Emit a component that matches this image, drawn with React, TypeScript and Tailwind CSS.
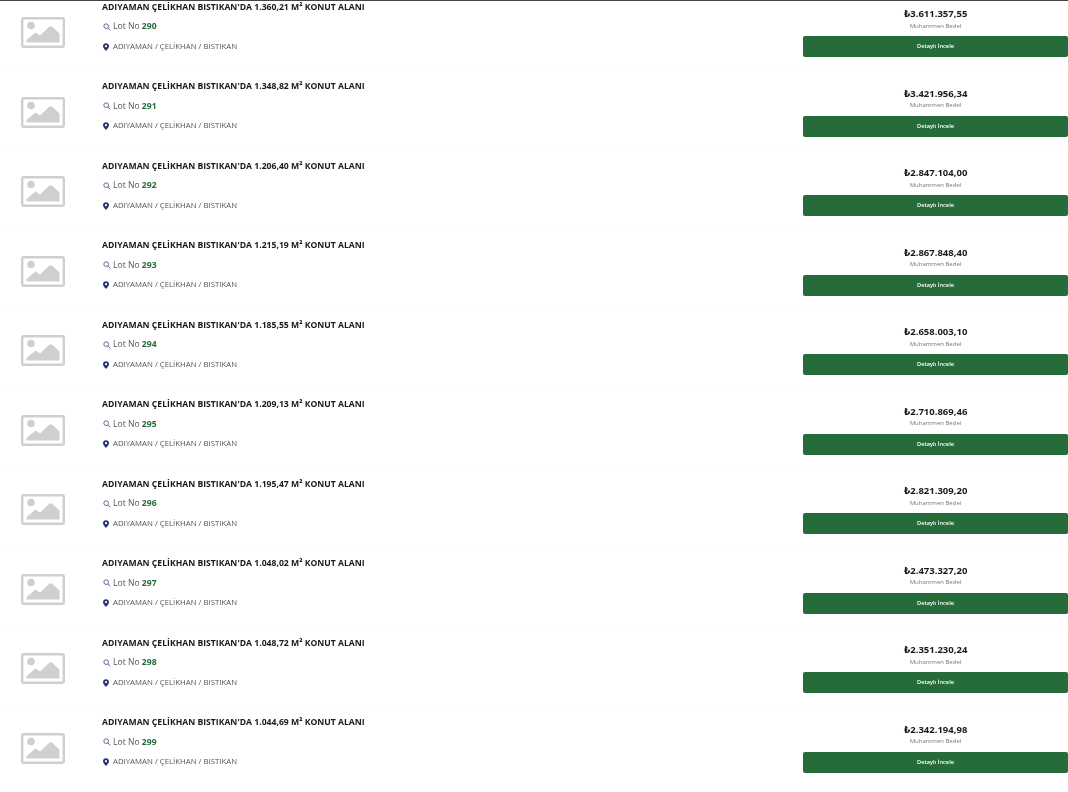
const lots = [
  { lot: 290, area: '1.360,21', price: '3.611.357,55' },
  { lot: 291, area: '1.348,82', price: '3.421.956,34' },
  { lot: 292, area: '1.206,40', price: '2.847.104,00' },
  { lot: 293, area: '1.215,19', price: '2.867.848,40' },
  { lot: 294, area: '1.185,55', price: '2.658.003,10' },
  { lot: 295, area: '1.209,13', price: '2.710.869,46' },
  { lot: 296, area: '1.195,47', price: '2.821.309,20' },
  { lot: 297, area: '1.048,02', price: '2.473.327,20' },
  { lot: 298, area: '1.048,72', price: '2.351.230,24' },
  { lot: 299, area: '1.044,69', price: '2.342.194,98' },
];

function Placeholder() {
  return (
    <svg width="44" height="31" viewBox="0 0 44 31">
      <rect x="1.2" y="1.2" width="41.6" height="28.6" rx="1.5" fill="#fff" stroke="#cfcfcf" strokeWidth="2.4" />
      <circle cx="10" cy="8.5" r="3.8" fill="#cfcfcf" />
      <path d="M5.5 25.5 V23 L14.5 15.5 L19 18.5 L28.5 9.5 L31 9.5 L38.5 16.5 V25.5 Z" fill="#cfcfcf" />
    </svg>
  );
}

function SearchIcon() {
  return (
    <svg width="8" height="8" viewBox="0 0 24 24" fill="none" stroke="#5c5f8a" strokeWidth="2.8">
      <circle cx="9.5" cy="9.5" r="7" />
      <path d="M15 15 L22 22" />
    </svg>
  );
}

function PinIcon() {
  return (
    <svg width="6" height="8" viewBox="0 0 14 18">
      <path fillRule="evenodd" fill="#27346f" d="M7 0 C3 0 0 3 0 7 C0 11.5 7 18 7 18 C7 18 14 11.5 14 7 C14 3 11 0 7 0 Z M7 4.5 A2.5 2.5 0 1 1 7 9.5 A2.5 2.5 0 1 1 7 4.5 Z" />
    </svg>
  );
}

function LotRow({ lot, area, price }: { lot: number; area: string; price: string }) {
  return (
    <div className="flex h-[79.5px] border-b border-[#fbfbfb]">
      <div className="flex w-[102px] shrink-0 items-center pl-[21px] pt-[5px]">
        <Placeholder />
      </div>
      <div className="min-w-0 flex-1 pt-[9.5px]">
        <h3 className="text-[8.64px] leading-[12px] font-bold text-[#1a1a1a]">
          ADIYAMAN ÇELİKHAN BISTIKAN'DA {area} M² KONUT ALANI
        </h3>
        <div className="mt-[8px] flex h-[12px] items-center text-[8.6px] text-[#555]">
          <span className="flex w-[11px] shrink-0 pl-[1px]">
            <SearchIcon />
          </span>
          <span>
            Lot No <span className="font-bold text-[#266b3a]">{lot}</span>
          </span>
        </div>
        <div className="mt-[8px] flex h-[12px] items-center text-[7.8px] text-[#555]">
          <span className="flex w-[11px] shrink-0 pl-[1px]">
            <PinIcon />
          </span>
          <span>ADIYAMAN / ÇELİKHAN / BISTIKAN</span>
        </div>
      </div>
      <div className="flex w-[265px] shrink-0 flex-col items-center pt-[16px]">
        <div className="text-[9.5px] leading-[14px] font-bold text-[#1a1a1a]">
          <span className="font-['DejaVu_Sans',sans-serif]">₺</span>
          {price}
        </div>
        <div className="mt-[0.5px] text-[6px] leading-[9px] text-[#777]">Muhammen Bedel</div>
        <button className="mt-[5.5px] h-[21px] w-full rounded-[2px] bg-[#266b3a] text-[5.7px] font-semibold text-white">
          Detaylı İncele
        </button>
      </div>
    </div>
  );
}

export default function App() {
  return (
    <div className="h-[792px] overflow-hidden bg-white font-['Open_Sans','Noto_Sans',sans-serif] blur-[0.3px]">
      <div className="relative z-10 h-px bg-[#444]" />
      <div className="mt-[-10px]">
        {lots.map(item => (
          <LotRow key={item.lot} {...item} />
        ))}
      </div>
    </div>
  );
}
